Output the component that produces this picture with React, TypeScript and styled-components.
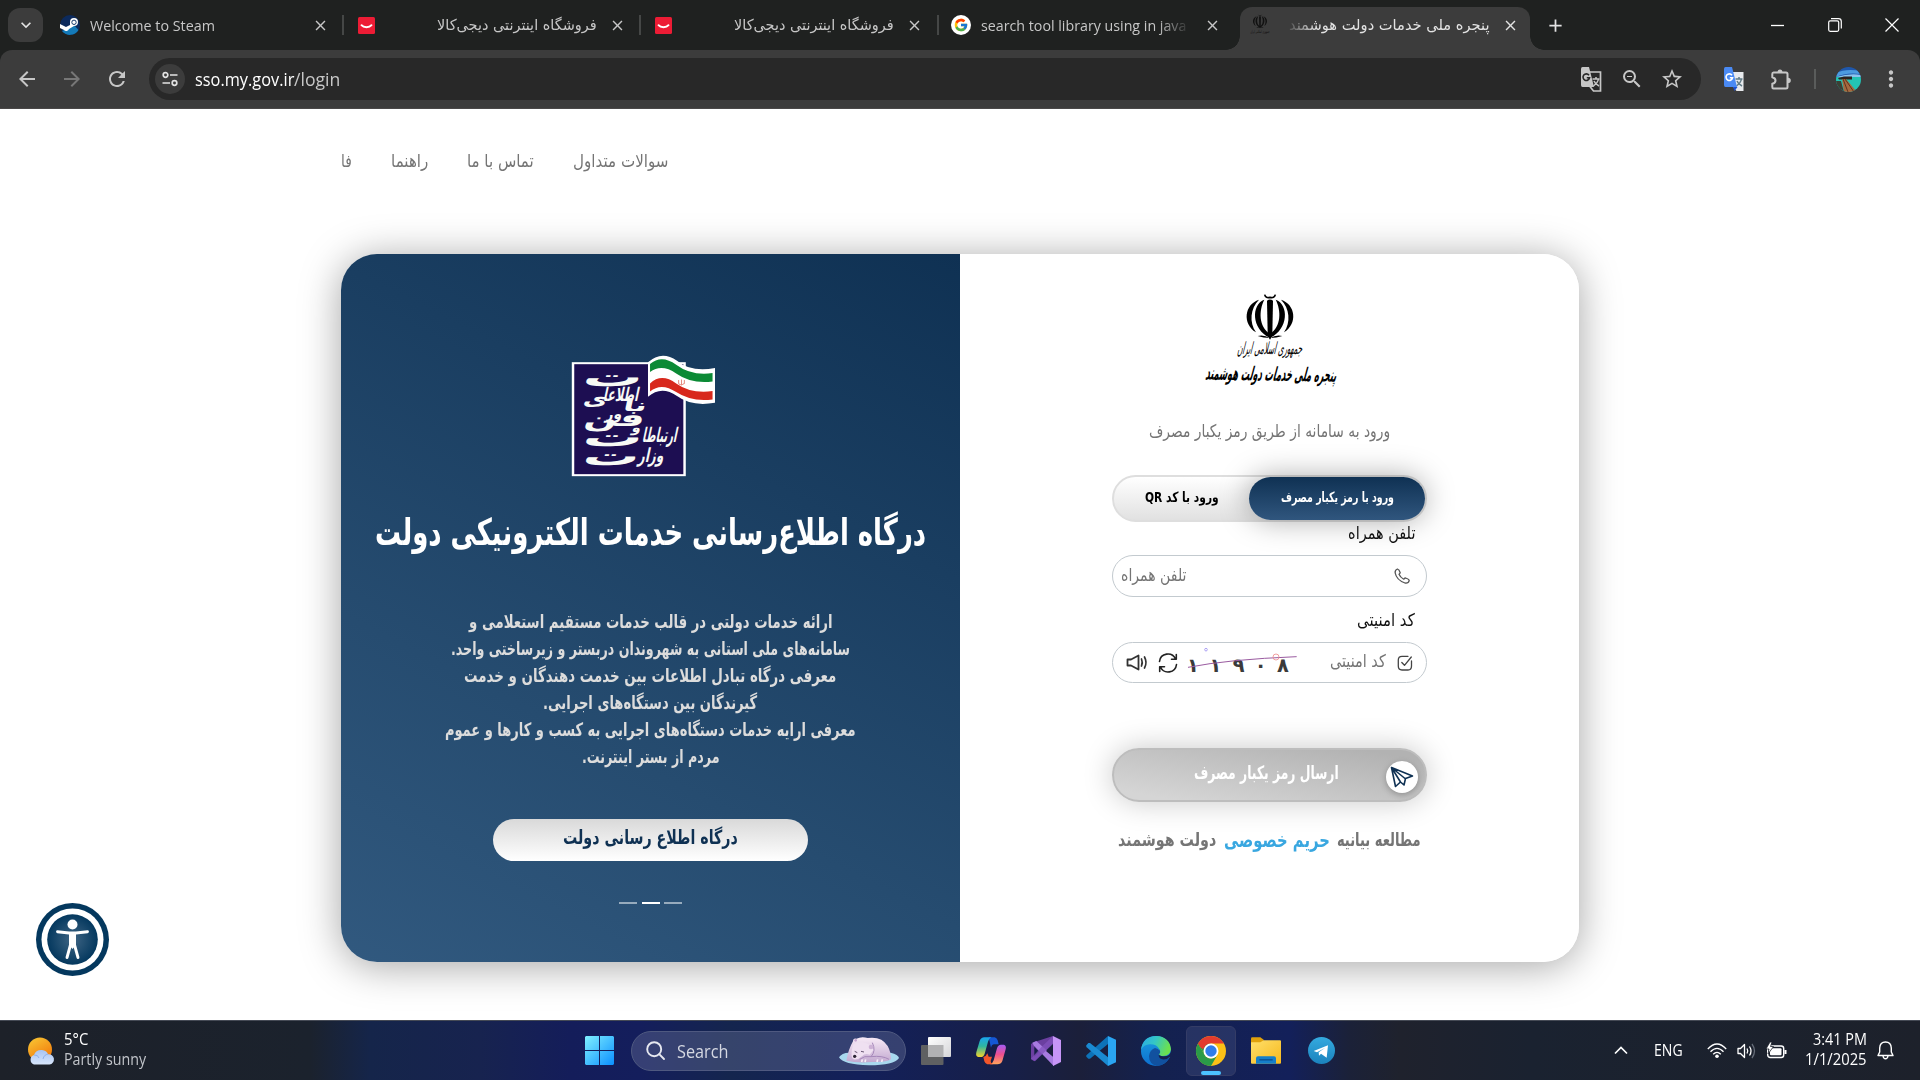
import React, { useLayoutEffect, useRef, useState } from "react";
import styled, { createGlobalStyle } from "styled-components";
import {
  MdArrowBack, MdArrowForward, MdRefresh, MdStarOutline, MdMoreVert,
  MdZoomOut, MdClose, MdAdd, MdKeyboardArrowDown,
} from "react-icons/md";
import { FcGoogle } from "react-icons/fc";

const Global = createGlobalStyle`
  * { box-sizing: border-box; }
  body { margin: 0; background: #fff; overflow: hidden; font-family: "Open Sans", "Noto Sans", "DejaVu Sans", sans-serif; }
  svg { display: block; flex: none; overflow: visible; }
`;

/* ---------- text that keeps to a given width ---------- */
const FitBox = styled.span<{ $w: number; $rtl?: boolean; $size: number; $weight?: number; $color?: string; $lh?: number; $dy?: number; $fade?: string }>`
  display: flex;
  flex: none;
  width: ${(p) => p.$w}px;
  direction: ${(p) => (p.$rtl ? "rtl" : "ltr")};
  font-family: ${(p) => (p.$rtl ? `"DejaVu Sans", sans-serif` : `"Open Sans", "Noto Sans", sans-serif`)};
  font-size: ${(p) => p.$size}px;
  font-weight: ${(p) => p.$weight ?? 400};
  line-height: ${(p) => p.$lh ?? 20}px;
  color: ${(p) => p.$color ?? "inherit"};
  white-space: nowrap;
  margin-top: ${(p) => p.$dy ?? 0}px;
  ${(p) => p.$fade && `mask-image: linear-gradient(${p.$fade}, #000 86%, rgba(0, 0, 0, .15) 100%);`}
`;
const FitInner = styled.span<{ $rtl?: boolean }>`
  display: block;
  flex: none;
  transform-origin: ${(p) => (p.$rtl ? "right" : "left")} center;
`;
type FitProps = { w: number; size: number; rtl?: boolean; weight?: number; color?: string; lh?: number; dy?: number; fade?: string; children: React.ReactNode };
function Fit({ w, size, rtl, weight, color, lh, dy, fade, children }: FitProps) {
  const ref = useRef<HTMLSpanElement>(null);
  const [scale, setScale] = useState(1);
  useLayoutEffect(() => {
    if (ref.current) setScale(w / ref.current.offsetWidth);
  }, [w, size]);
  return (
    <FitBox $w={w} $size={size} $rtl={rtl} $weight={weight} $color={color} $lh={lh} $dy={dy} $fade={fade}>
      <FitInner ref={ref} $rtl={rtl} style={{ transform: `scaleX(${scale})` }}>{children}</FitInner>
    </FitBox>
  );
}

const Screen = styled.div`
  width: 1920px; height: 1080px; display: flex; flex-direction: column; overflow: hidden; background: #fff;
`;

/* ---------- browser chrome ---------- */
const TabStrip = styled.div`
  height: 50px; background: #1f2120; display: flex; align-items: stretch; color: #c7c7c7; flex: none;
`;
const TabSearch = styled.div`
  width: 35px; height: 34px; margin: 8px 4px 0 8px; border-radius: 12px; background: #3c3c3c;
  display: flex; align-items: center; justify-content: center; color: #e3e3e3;
`;
const Tab = styled.div<{ $sep?: boolean }>`
  width: 297.2px; display: flex; align-items: center; padding-left: 12.5px; flex: none;
  background: ${(p) => (p.$sep ? "linear-gradient(#454746,#454746) right 0 top 15px / 2px 20px no-repeat" : "none")};
`;
const ActiveTab = styled.div`
  width: 290px; margin: 7px 0 0 4px; height: 43px; background: #3c3c3c; border-radius: 12px 12px 0 0; flex: none;
  display: flex; align-items: center; padding: 0 0 7px 10px; color: #e3e3e3;
`;
const Flare = styled.div<{ $right?: boolean }>`
  width: 14px; height: 14px; align-self: flex-end; flex: none;
  margin-left: ${(p) => (p.$right ? 0 : -10)}px;
  margin-right: ${(p) => (p.$right ? 0 : -4)}px;
  background: radial-gradient(circle at ${(p) => (p.$right ? "100% 0" : "0 0")}, transparent 13.5px, #3c3c3c 14px);
`;
const IconSlot = styled.div<{ $w?: number }>`
  width: ${(p) => p.$w ?? 20}px; display: flex; align-items: center; justify-content: center; flex: none;
`;
const TabTitle = styled.div<{ $end?: boolean }>`
  width: 210px; margin: 0 12px 0 10px; display: flex; justify-content: ${(p) => (p.$end ? "flex-end" : "flex-start")}; flex: none;
`;
const WindowButtons = styled.div`
  margin-left: auto; display: flex; align-items: center; color: #fff;
`;
const WinBtn = styled.div`
  width: 57px; display: flex; justify-content: center;
`;
const StripBack = styled.div`
  background: #1f2120; flex: none;
`;
const Toolbar = styled.div`
  height: 59px; background: #3c3c3c; border-radius: 12px 12px 0 0; display: flex; align-items: center; flex: none;
  border-bottom: 1px solid #4a4848; color: #c7c7c7; padding-left: 4.5px;
`;
const Omnibox = styled.div`
  width: 1552px; height: 42px; border-radius: 21px; background: #282828; margin-left: 9px; display: flex; align-items: center;
  padding: 0 8px 0 6px; flex: none;
`;
const SiteInfo = styled.div`
  width: 30px; height: 30px; border-radius: 50%; background: #3c3c3c; display: flex; align-items: center; justify-content: center; margin-right: 10.5px;
`;
const Push = styled.div<{ $n?: number }>`flex: ${(p) => p.$n ?? 1};`;
const VRule = styled.div`width: 2px; height: 20px; background: #5a5c5b; margin: 0 20.5px 0 11px;`;

/* ---------- page ---------- */
const Page = styled.main`
  height: 911px; flex: none; display: flex; flex-direction: column; background: #fff; overflow: hidden; position: relative;
`;
const Nav = styled.nav`
  height: 145px; padding: 42px 0 0 341px; display: flex; gap: 39px; color: #757575; flex: none;
`;
const Card = styled.section`
  width: 1238px; height: 708px; margin-left: 341px; border-radius: 36px; display: flex; flex: none;
  box-shadow: 0 4px 40px rgba(0, 0, 0, 0.36);
`;
const Info = styled.div`
  width: 619px; border-radius: 36px 0 0 36px; background: linear-gradient(207deg, #0f3153 0%, #1a3e61 32%, #264c70 66%, #31597f 100%);
  display: flex; flex-direction: column; align-items: center; padding-top: 102px;
`;
const LogoRow = styled.div`display: flex; padding-right: 14px;`;
const Paragraph = styled.div`
  display: flex; flex-direction: column; align-items: center; margin-top: 53px; color: #dcdcdc;
`;
const PortalButton = styled.div`
  width: 315px; height: 42px; border-radius: 21px; margin-top: 49px; display: flex; justify-content: center; align-items: center;
  background: linear-gradient(#d9d9d9, #fff); color: #0f3153;
`;
const Dots = styled.div`display: flex; gap: 4.5px; margin-top: 41px;`;
const Dot = styled.div<{ $on?: boolean }>`width: 18px; height: 2px; background: ${(p) => (p.$on ? "#fff" : "#97abbd")};`;

const Login = styled.div`
  width: 619px; border-radius: 0 36px 36px 0; background: #fff; display: flex; flex-direction: column; align-items: center; padding-top: 39px;
`;
const Toggle = styled.div`
  width: 315px; height: 47px; margin-top: 34px; border-radius: 24px; border: 2px solid #dedede;
  background: linear-gradient(#fff, #e1e1e1); display: flex; align-items: stretch; flex: none;
`;
const ToggleOff = styled.div`
  width: 135px; display: flex; justify-content: flex-end; align-items: center; padding: 0 30px 4px 0; color: #000;
`;
const ToggleOn = styled.div`
  width: 176px; border-radius: 22px; background: linear-gradient(#0f3153, #30567e); color: #fff; display: flex; justify-content: center; align-items: center;
  padding-bottom: 4px; box-shadow: 0 0 30px rgba(0, 0, 0, 0.35);
`;
const FieldLabel = styled.div<{ $h: number }>`
  width: 315px; height: ${(p) => p.$h}px; display: flex; justify-content: flex-end; align-items: center; padding-right: 12px; color: #111; position: relative; flex: none;
`;
const Field = styled.div<{ $h: number; $pl: number; $pr: number }>`
  width: 315px; height: ${(p) => p.$h}px; border: 1px solid #c3cacf; border-radius: 21px; display: flex; align-items: center;
  padding: 0 ${(p) => p.$pr}px 0 ${(p) => p.$pl}px; flex: none; color: #757575; background: #fff;
`;
const Send = styled.div`
  width: 315px; height: 54px; margin-top: 65px; border-radius: 27px; border: 2px solid #bdbdbd; flex: none;
  background: linear-gradient(190deg, #b2b2b2 10%, #d5d5d5 90%); box-shadow: 0 0 30px rgba(0, 0, 0, 0.22);
  display: flex; align-items: center; justify-content: flex-end; padding-right: 7px; gap: 47px; color: #fff;
`;
const SendBadge = styled.div`
  width: 32px; height: 32px; border-radius: 50%; background: #fff; box-shadow: 0 2px 6px rgba(0,0,0,.25); display: flex; align-items: center; justify-content: center; margin-top: 3px;
`;
const Privacy = styled.div`display: flex; margin-top: 28px; gap: 7px; color: #757575; align-items: center;`;
const Access = styled.div`position: absolute; left: 36px; top: 794px;`;

/* ---------- taskbar ---------- */
const Taskbar = styled.footer`
  height: 60px; flex: none; border-top: 1px solid #454a55; display: flex; align-items: center; color: #fff;
  background: linear-gradient(90deg, #1d2129 0, #1b222d 310px, #15254a 370px, #17234f 480px, #141d5a 570px, #141e5c 640px, #14254e 730px, #13205a 860px, #171f48 1010px, #1b1f3a 1080px, #14214e 1150px, #13205a 1290px, #1b2138 1350px, #1f222d 1400px, #1a2230 1530px, #1d212b 1920px);
`;
const Weather = styled.div`width: 585px; padding-left: 27px; display: flex; gap: 9px; align-items: center; flex: none;`;
const Stack = styled.div<{ $end?: boolean }>`
  display: flex; flex-direction: column; padding-bottom: 3px; margin-left: ${(p) => (p.$end ? 5 : 0)}px; align-items: ${(p) => (p.$end ? "flex-end" : "flex-start")};
`;
const SearchBox = styled.div`
  width: 275px; height: 40px; margin: 0 2.5px 0 17px; border-radius: 20px; border: 1px solid #4f5980; background: rgba(120, 130, 165, 0.34);
  display: flex; align-items: center; padding: 0 6px 0 14px; flex: none; color: #d5d8e2;
`;
const AppSlot = styled.div<{ $active?: boolean }>`
  width: ${(p) => (p.$active ? 50 : 55)}px; height: 50px; margin: 0 ${(p) => (p.$active ? 2.5 : 0)}px; flex: none; display: flex; flex-direction: column; align-items: center; justify-content: center;
  border-radius: 6px; border: ${(p) => (p.$active ? "1px solid #343c66" : "0")};
  background: ${(p) => (p.$active ? "rgba(110,120,160,.22)" : "none")};
`;
const ActiveBar = styled.div`width: 20px; height: 4px; border-radius: 2px; background: #4cc2ff; margin: 5px 0 -9px;`;
const Tray = styled.div`margin-left: auto; display: flex; align-items: center; padding-right: 16.5px;`;

/* ---------- drawings ---------- */
const Digikala = () => (
  <svg width="17" height="17" viewBox="0 0 17 17"><rect width="17" height="17" rx="1.5" fill="#ed1c35" /><path d="M3.5 8.2c2.2 2.7 7.800 2.700 10 0" stroke="#fff" strokeWidth="1.9" fill="none" strokeLinecap="round" /></svg>
);
const emblemHalf = (
  <>
    <path d="M537 90C493 104 486 162 528 188C507 158 511 116 537 90Z" />
    <path d="M553 90C513 104 514 178 569 204L570 192C536 172 536 122 553 90Z" />
  </>
);
const EmblemShape = () => (
  <g>
    {emblemHalf}
    <g transform="translate(1140 0) scale(-1 1)">{emblemHalf}</g>
    <path d="M561 93Q570 86 579 93L577 190Q574 206 570 210Q566 206 563 190Z" />
    <path d="M533 199Q552 194 570 206Q588 194 607 199Q590 205 570 205Q550 205 533 199Z" />
    <path d="M554 75Q557 87 570 83Q583 87 586 75" fill="none" stroke="currentColor" strokeWidth="5" />
  </g>
);
const svgText = { fontFamily: "DejaVu Sans", direction: "rtl" as const, textAnchor: "middle" as const };
const StateLogo = () => (
  <svg width="136" height="96" viewBox="366 70 408 288" fill="#000" color="#000">
    <EmblemShape />
    <g transform="translate(568 252) skewX(-14)"><text {...svgText} fontSize="50" textLength="194" lengthAdjust="spacingAndGlyphs">جمهوری اسلامی ایران</text></g>
    <g transform="translate(571 333) rotate(1) skewX(-14)"><text {...svgText} fontSize="58" fontWeight="bold" textLength="392" lengthAdjust="spacingAndGlyphs">پنجره ملی خدمات دولت هوشمند</text></g>
  </svg>
);
const Word = ({ x, y, w, s, children }: { x: number; y: number; w: number; s: number; children: string }) => (
  <g transform={`translate(${x + w / 2} ${y}) skewX(-10)`}>
    <text {...svgText} fontSize={s} fontWeight="bold" fill="#f8faf5" textLength={w} lengthAdjust="spacingAndGlyphs">{children}</text>
  </g>
);
const MinistryLogo = () => (
  <svg width="143" height="120" viewBox="593 678 350 359" preserveAspectRatio="none">
    <rect x="595.500" y="699.500" width="273" height="335" fill="#1d0e52" stroke="#fff" strokeWidth="6" />
    <Word x={616} y={768} w={146} s={78}>ت</Word>
    <Word x={668} y={814} w={86} s={56}>اطلاعا</Word>
    <Word x={618} y={826} w={60} s={54}>ی</Word>
    <Word x={716} y={842} w={58} s={50}>نا</Word>
    <Word x={674} y={866} w={40} s={46}>ور</Word>
    <Word x={620} y={888} w={148} s={66}>فن</Word>
    <Word x={738} y={904} w={22} s={40}>و</Word>
    <Word x={616} y={946} w={146} s={78}>ت</Word>
    <Word x={764} y={936} w={84} s={60}>ارتباطا</Word>
    <Word x={616} y={1003} w={138} s={78}>ت</Word>
    <Word x={754} y={994} w={62} s={58}>وزار</Word>
    <path d="M779 697Q812 660 850 692Q885 728 943 714V818Q885 830 850 798Q812 765 779 800Z" fill="#fff" />
    <path d="M784 702Q812 672 848 704Q885 738 937 729V754Q885 762 848 730Q812 700 784 726Z" fill="#0b8a35" />
    <path d="M784 760Q812 728 848 760Q885 792 937 783V808Q885 816 848 786Q812 756 784 784Z" fill="#d8281c" />
    <path d="M854 750v10q6 8 14 0v-10M861 748v18" stroke="#e58b80" strokeWidth="2.500" fill="none" />
  </svg>
);
const Translate = ({ color }: { color?: boolean }) => (
  <svg width="21" height="25" viewBox="0 0 21 25">
    <path d="M8.500 5H19.500V24H12.500L8.500 19" fill={color ? "#e8eaed" : "none"} stroke={color ? "none" : "#c7c7c7"} strokeWidth="1.700" />
    <path d="M11.500 12h7M15 10v2M17.500 12c-.5 3-2.500 5-5 7M13 14c1 2.500 3 4 5 5" stroke={color ? "#5f7a85" : "#c7c7c7"} strokeWidth="1.500" fill="none" />
    <path d="M1.500 0H8L13 20H1.500Q0 20 0 18V2Q0 0 1.500 0Z" fill={color ? "#4a8af4" : "#c7c7c7"} />
    {color && <path d="M9 20H13.500L10.500 24Z" fill="#1a4fd0" />}
    <path d="M8 8.200A3.300 3.300 0 1 0 8.600 10.700H5.800" fill="none" stroke={color ? "#fff" : "#282828"} strokeWidth="1.600" />
  </svg>
);
const Puzzle = () => (
  <svg width="21" height="21" viewBox="0 0 21 21">
    <path d="M2.500 3.500H15Q16.500 3.500 16.500 5V18Q16.500 19.500 15 19.500H2.500Q1.300 19.500 1.300 18V14.800Q4.500 14 4.500 11.500Q4.500 9 1.300 8.200V5Q1.300 3.500 2.500 3.500Z" fill="none" stroke="#c7c7c7" strokeWidth="2" strokeLinejoin="round" />
    <path d="M6.500 3.500A2.500 3 0 0 1 11.500 3.500ZM16.800 8.800A3 2.600 0 0 1 16.800 14Z" fill="#c7c7c7" />
  </svg>
);
const Avatar = () => (
  <svg width="25" height="25" viewBox="0 0 25 25">
    <defs><clipPath id="av"><circle cx="12.500" cy="12.500" r="12.500" /></clipPath></defs>
    <g clipPath="url(#av)">
      <rect width="25" height="10" fill="#1f57ab" /><path d="M0 6Q10 1 25 4V7Q10 5 0 10Z" fill="#4c9be0" /><path d="M0 10Q14 6 25 8V10Z" fill="#8cc4ee" />
      <rect y="10" width="25" height="15" fill="#23c3b4" /><path d="M2 11l6-1.500h8v3H3Z" fill="#2b2420" /><path d="M6 12h4L21 25H8Z" fill="#a5693f" /><path d="M7 12L12 25M9 12L18 25" stroke="#5e3420" /><path d="M0 14h5l3 11H0Z" fill="#3c3f35" />
    </g>
  </svg>
);
const Person = () => (
  <svg width="73" height="73" viewBox="0 0 73 73">
    <defs><radialGradient id="acc"><stop offset="0" stopColor="#3f6584" /><stop offset="1" stopColor="#04385e" /></radialGradient></defs>
    <circle cx="36.500" cy="36.500" r="36.500" fill="#04385e" /><circle cx="36.500" cy="36.500" r="31" fill="#fff" /><circle cx="36.500" cy="36.500" r="25.300" fill="url(#acc)" />
    <circle cx="36.500" cy="21.500" r="5" fill="#fff" />
    <path d="M21.500 28.700L33 30H40L51.500 28.700M36.500 30V42M35 40L31 54.500M38 40L42 54.500" stroke="#fff" strokeWidth="2.900" strokeLinecap="round" fill="none" />
    <path d="M33 29.500H40V42L36.500 46L33 42Z" fill="#fff" />
  </svg>
);
const Captcha = () => (
  <svg width="112" height="36" viewBox="325 562 336 108">
    <g fontFamily="DejaVu Sans" fontWeight="bold" fill="#3a3a3a" fontSize="58" textAnchor="middle">
      <text x="343" y="642">۱</text><text x="410" y="642">۱</text><text x="480" y="642">۹</text><text x="546" y="644">۰</text><text x="613" y="642">۸</text>
    </g>
    <path d="M328 629Q450 605 654 597" stroke="#9a5ba0" strokeWidth="3" fill="none" />
    <circle cx="592" cy="598" r="9" fill="none" stroke="#ee8d8d" strokeWidth="2.500" /><circle cx="382" cy="576" r="4" fill="none" stroke="#8c7df0" strokeWidth="2" />
  </svg>
);
const Speaker = () => (
  <svg width="22" height="17" viewBox="0 0 22 17" fill="none" stroke="#333" strokeWidth="1.800"><path d="M1.500 5.500H5L12.500 1.500V15.500L5 11.500H1.500Z" strokeLinejoin="round" /><path d="M15.500 5Q17 8.500 15.500 12M18.500 3Q21.500 8.500 18.500 14" strokeLinecap="round" strokeWidth="1.700" /></svg>
);
const Reload = () => (
  <svg width="20" height="20" viewBox="0 0 20 20" fill="none" stroke="#222" strokeWidth="1.600" strokeLinecap="round" strokeLinejoin="round"><path d="M1.500 8.500A8.400 8.400 0 0 1 17.500 6M18.300 1.500V6.200H13.500M18.500 11.500A8.400 8.400 0 0 1 2.500 14M1.700 18.500V13.800H6.500" /></svg>
);
const Check = () => (
  <svg width="16" height="16" viewBox="0 0 16 16" fill="none" stroke="#444" strokeWidth="1.300" strokeLinecap="round" strokeLinejoin="round"><path d="M14.500 6V11Q14.500 15 11 15H5Q1.300 15 1.300 11V5Q1.300 1.300 5 1.300H11M4.800 7.500L7.500 10.300L14.300 2" /></svg>
);
const Phone = () => (
  <svg width="16" height="16" viewBox="0 0 16 16" fill="none" stroke="#555" strokeWidth="1.300" strokeLinejoin="round"><path d="M3.500 1Q.6 2.200 1.200 5Q2.500 12 11 15Q14.500 15.500 15.200 12.600Q15.200 11.300 11.600 10Q10.800 10 9.700 11.200Q6.200 9.300 5 6.300L6.200 4.800Q5.200 1.500 3.500 1Z" /></svg>
);
const Plane = () => (
  <svg width="24" height="22" viewBox="0 0 24 22" fill="none" stroke="#0f3153" strokeWidth="1.600" strokeLinejoin="round"><path d="M1.500 1.500L22.500 10L15.500 12.500L14 19L10.500 16L5.500 20.500L1.500 1.500L15 12.500M1.500 1.500L10.500 16" /></svg>
);
const SunCloud = () => (
  <svg width="28" height="28" viewBox="0 0 28 28">
    <defs><linearGradient id="sun" x2=".6" y2="1"><stop stopColor="#f8ca36" /><stop offset="1" stopColor="#f27a0b" /></linearGradient><linearGradient id="cl" x2="0" y2="1"><stop stopColor="#a8c4f2" /><stop offset="1" stopColor="#d7e5fb" /></linearGradient></defs>
    <circle cx="13" cy="12.500" r="12" fill="url(#sun)" /><path d="M7 27.500A5 5 0 0 1 7 18Q9 12.500 15 13Q19.500 13.500 21 17.200A5.200 5.200 0 0 1 22.500 27.500Z" fill="url(#cl)" /><path d="M7 18Q11 17.500 12 21M21 17.200Q17 17.500 16 22" stroke="#8fb0ea" fill="none" />
  </svg>
);
const WinLogo = () => (
  <svg width="29" height="29" viewBox="0 0 29 29"><defs><linearGradient id="win" x2="1" y2="1"><stop stopColor="#80f0ff" /><stop offset="1" stopColor="#0b8fff" /></linearGradient></defs><path d="M1 0H14V14H0V1ZM15 0H28L29 1V14H15ZM0 15H14V29H1L0 28ZM15 15H29V28L28 29H15Z" fill="url(#win)" /></svg>
);
const Bear = () => (
  <svg width="60" height="30" viewBox="0 0 180 90">
    <defs><linearGradient id="bear" x2="0" y2="1"><stop stopColor="#f8ebf7" /><stop offset="1" stopColor="#c3a9d0" /></linearGradient></defs>
    <path d="M0 64Q8 50 30 50H155Q178 56 180 66Q165 88 90 88Q12 86 0 64Z" fill="#a8d8ee" />
    <path d="M22 74Q28 40 42 16Q42 6 52 8Q68 0 86 6Q128 0 146 30Q156 48 156 70Q140 80 100 78Q55 82 22 74Z" fill="url(#bear)" />
    <path d="M100 20Q112 45 96 62Q76 58 62 70M96 62Q130 58 150 70" stroke="#a688ba" strokeWidth="3" fill="none" />
    <path d="M42 26Q58 12 82 22Q100 28 103 42L92 56Q78 50 70 60Q58 72 44 70Q32 64 42 26Z" fill="#efe0f1" />
    <circle cx="47" cy="61" r="5" fill="#2b2333" /><circle cx="96" cy="33" r="7" fill="#cdb2d6" /><circle cx="50" cy="13" r="4" fill="#c6a5cf" /><path d="M47 46l8 4M66 46l9 2" stroke="#4a3a58" strokeWidth="2.500" /><path d="M70 70l-2 8M80 70l-2 8M116 70l-2 8M130 70l-2 8" stroke="#f5ecf7" strokeWidth="5" />
  </svg>
);
const TaskView = () => (
  <svg width="30" height="28" viewBox="0 0 30 28"><defs><linearGradient id="tv" x2="1" y2="1"><stop stopColor="#fff" /><stop offset="1" stopColor="#d5d5d8" /></linearGradient></defs><rect y="8" width="22.500" height="20" rx="1" fill="#5f6062" /><rect x="7" width="23" height="20" rx="1" fill="url(#tv)" /><rect x="7" y="8" width="15.500" height="12" fill="#b1b1b3" /></svg>
);
const Copilot = () => (
  <svg width="30" height="28" viewBox="0 0 90 84">
    <defs>
      <linearGradient id="cpa" x2="0" y2="1"><stop stopColor="#1aa6ee" /><stop offset=".45" stopColor="#2fb7a0" /><stop offset="1" stopColor="#f4d42a" /></linearGradient>
      <linearGradient id="cpb" x2="0" y2="1"><stop stopColor="#a35cf5" /><stop offset=".5" stopColor="#ee4f8e" /><stop offset="1" stopColor="#ffa55c" /></linearGradient>
    </defs>
    <path d="M38 1H56Q62 2 65 10L68 22H54Q48 22 45 32Z" fill="#1558d6" />
    <path d="M25 1H46Q39 4 36 14L26 50Q23 60 14 60H7Q-2 59 1 46L11 12Q15 1 25 1Z" fill="url(#cpa)" />
    <path d="M64 82H42Q50 80 53 70L63 34Q66 23 75 23H83Q92 25 89 37L79 72Q75 82 64 82Z" fill="url(#cpb)" />
    <path d="M51 82H34Q28 81 25 73L22 60Q30 59 34 49L38 59H48L44 72Q43 78 51 82Z" fill="#f2562b" />
  </svg>
);
const VisualStudio = () => (
  <svg width="30" height="30" viewBox="0 0 90 90"><path d="M0 24L10 18L66 0V22L10 76L0 70Z" fill="#6b3fa0" /><path d="M10 32V62L24 47Z" fill="#171f48" /><path d="M4 20L16 15L68 62V90L8 28Z" fill="#a77be0" /><path d="M0 68L12 76L66 24V0L32 32Z" fill="#8253bd" opacity=".75" /><path d="M30 10L48 18L66 0V24L44 44L30 30Z" fill="#171f48" opacity="0" /><path d="M66 0L90 12V78L66 90Z" fill="#c795f7" /><path d="M66 28V62L45 45Z" fill="#1b1f3e" /></svg>
);
const VsCode = () => (
  <svg width="30" height="30" viewBox="0 0 90 90"><path d="M1 58L66 0V24L12 68H7L1 62Z" fill="#0d72b8" /><path d="M1 28L7 21H12L66 64V90L1 33Z" fill="#1a8ad2" /><path d="M66 0L90 11V79L66 90Z" fill="#2aa5f2" /></svg>
);
const Edge = () => (
  <svg width="30" height="30" viewBox="0 0 90 90">
    <defs><linearGradient id="eg" x2="1" y2=".3"><stop stopColor="#2aa9e8" /><stop offset=".5" stopColor="#34c6c6" /><stop offset="1" stopColor="#6be04f" /></linearGradient><linearGradient id="eb" x2="0" y2="1"><stop stopColor="#1b9fdf" /><stop offset="1" stopColor="#0d6fd0" /></linearGradient></defs>
    <circle cx="45" cy="45" r="45" fill="url(#eb)" />
    <path d="M0 42Q5 0 46 0Q86 2 90 40Q88 60 66 60Q54 60 54 54Q60 48 54 38Q46 24 26 25Q8 26 0 42Z" fill="url(#eg)" />
    <path d="M86 64Q74 88 48 90Q24 84 24 60Q26 42 42 36Q52 38 56 44Q52 36 56 42Q60 50 53 55Q54 68 70 68Q78 68 86 64Z" fill="#11519f" />
    <path d="M90 44Q88 62 66 61Q54 60 54 54Q50 66 64 70Q78 72 90 60Z" fill="#16204e" />
  </svg>
);
const Chrome = () => (
  <svg width="30" height="30" viewBox="0 0 90 90">
    <circle cx="45" cy="45" r="45" fill="#fbc116" /><path d="M6 22.500A45 45 0 0 0 45 90L64.500 56.200A22.500 22.500 0 0 1 25.500 56.200Z" fill="#2a9b48" /><path d="M6 22.500L25.500 56.200L45 67L45 22.500Z" fill="#2a9b48" /><path d="M6 22.500A45 45 0 0 1 84 22.500H45A22.500 22.500 0 0 0 24 37Q18 44 6 22.500Z" fill="#e33b2e" />
    <circle cx="45" cy="45" r="22.500" fill="#fff" /><circle cx="45" cy="45" r="17" fill="#2f7de9" />
  </svg>
);
const Folder = () => (
  <svg width="30" height="27" viewBox="0 0 90 80"><defs><linearGradient id="fo" x2="1" y2="1"><stop stopColor="#ffdf6b" /><stop offset="1" stopColor="#f6b91d" /></linearGradient></defs><path d="M0 4Q0 0 4 0H28L38 8V24H0Z" fill="#e0a10c" /><path d="M0 15H28L38 9H87Q90 9 90 12V77Q90 80 87 80H3Q0 80 0 77Z" fill="url(#fo)" /><path d="M15 80V63Q15 57 21 57H69Q75 57 75 63V80Z" fill="#157fca" /><path d="M25 68H65" stroke="#0a4f91" strokeWidth="4" /></svg>
);
const Telegram = () => (
  <svg width="27" height="27" viewBox="0 0 81 81"><defs><linearGradient id="tg" x2="0" y2="1"><stop stopColor="#34aadf" /><stop offset="1" stopColor="#1b82bd" /></linearGradient></defs><circle cx="40.500" cy="40.500" r="40.500" fill="url(#tg)" /><path d="M17 42L60 25L56 62L39 50L33 56L32 46L52 32L27 46Z" fill="#fff" /></svg>
);
const Wifi = () => (
  <svg width="20" height="16" viewBox="0 0 20 16" fill="none" stroke="#fff" strokeWidth="1.300"><path d="M.8 6Q10-4 19.200 6M3.500 8.800Q10 1.800 16.500 8.800M6.200 11.300Q10 7.300 13.800 11.300" /><circle cx="10" cy="13.300" r="1.800" fill="#fff" stroke="none" /></svg>
);
const Volume = () => (
  <svg width="20" height="16" viewBox="0 0 20 16" fill="none" stroke="#fff" strokeWidth="1.300" strokeLinejoin="round"><path d="M1 5.500H3.500L7.500 1.500V14.500L3.500 10.500H1ZM10 5.500Q11.500 8 10 10.500M12.500 3.500Q15.500 8 12.500 12.500" /><path d="M15 1Q20 8 15 15" stroke="#666c78" /></svg>
);
const Battery = () => (
  <svg width="21" height="17" viewBox="0 0 21 17"><rect x="1.700" y="4" width="16" height="11.500" rx="2.500" fill="none" stroke="#fff" strokeWidth="1.400" /><rect x="4" y="6.300" width="11.500" height="7" rx="1" fill="#fff" /><path d="M18.500 8H20.500V12H18.500Z" fill="#fff" /><path d="M4 0L0 7H3L2 12L7.500 4.500H4.500L6 0Z" fill="#fff" stroke="#1d212b" strokeWidth=".8" /></svg>
);
const Bell = () => (
  <svg width="17" height="19" viewBox="0 0 17 19" fill="none" stroke="#fff" strokeWidth="1.400" strokeLinejoin="round"><path d="M1 14.500L2.700 11V7Q3 1 8.500 1Q14 1 14.300 7V11L16 14.500ZM6 15Q6.500 17.800 8.500 17.800Q10.500 17.800 11 15" /></svg>
);

const X = () => <IconSlot $w={18}><MdClose size={17} /></IconSlot>;

const lines: [string, number][] = [
  ["ارائه خدمات دولتی در قالب خدمات مستقیم استعلامی و", 363],
  ["سامانه‌های ملی استانی به شهروندان دربستر و زیرساختی واحد.", 399],
  ["معرفی درگاه تبادل اطلاعات بین خدمت دهندگان و خدمت", 372],
  ["گیرندگان بین دستگاه‌های اجرایی.", 214],
  ["معرفی ارایه خدمات دستگاه‌های اجرایی به کسب و کارها و عموم", 411],
  ["مردم از بستر اینترنت.", 138],
];

export default function App() {
  return (
    <Screen>
      <Global />
      <TabStrip>
        <TabSearch><MdKeyboardArrowDown size={20} /></TabSearch>
        <Tab $sep>
          <IconSlot>
            <svg width="20" height="20" viewBox="0 0 20 20"><circle cx="10" cy="10" r="10" fill="#0c2a5c" /><path d="M2 16A10 10 0 0 0 18.500 15L14 10Z" fill="#147ab8" /><path d="M0 9L6 12L10 10L10 7A4 4 0 1 1 14 11L9 14A3 3 0 0 1 4 15L0 13Z" fill="#fff" /><circle cx="14" cy="7.300" r="2.200" fill="none" stroke="#15396b" /></svg>
          </IconSlot>
          <TabTitle><Fit w={125} size={15}>Welcome to Steam</Fit></TabTitle><X />
        </Tab>
        {[0, 1].map((i) => (
          <Tab key={i} $sep>
            <IconSlot><Digikala /></IconSlot>
            <TabTitle $end><Fit w={160} size={15} rtl>فروشگاه اینترنتی دیجی‌کالا</Fit></TabTitle><X />
          </Tab>
        ))}
        <Tab>
          <IconSlot><svg width="20" height="20" viewBox="0 0 20 20"><circle cx="10" cy="10" r="10" fill="#fff" /><g transform="translate(2.500 2.500)"><FcGoogle size={15} /></g></svg></IconSlot>
          <TabTitle><Fit w={205} size={15} fade="90deg">search tool library using in java</Fit></TabTitle><X />
        </Tab>
        <Flare />
        <ActiveTab>
          <IconSlot><svg width="20" height="22" viewBox="470 70 200 215" fill="#111" color="#111"><EmblemShape /><text {...svgText} x="570" y="262" fontSize="44" textLength="190" lengthAdjust="spacingAndGlyphs">جمهوری اسلامی ایران</text></svg></IconSlot>
          <TabTitle $end><Fit w={201} size={15} rtl fade="270deg">پنجره ملی خدمات دولت هوشمند</Fit></TabTitle><X />
        </ActiveTab>
        <Flare $right />
        <IconSlot $w={24}><MdAdd size={21} color="#e3e3e3" /></IconSlot>
        <WindowButtons>
          <WinBtn><svg width="13" height="13"><path d="M0 6.500H13" stroke="#fff" strokeWidth="1.300" /></svg></WinBtn>
          <WinBtn><svg width="14" height="14" viewBox="0 0 14 14" fill="none" stroke="#fff" strokeWidth="1.200"><rect x=".7" y="2.800" width="10" height="10.500" rx="1.500" /><path d="M3 .7H10.500Q13.300.7 13.300 3.500V10.500" /></svg></WinBtn>
          <WinBtn><svg width="14" height="14"><path d="M.5.5L13.500 13.500M13.500.5L.5 13.500" stroke="#fff" strokeWidth="1.200" /></svg></WinBtn>
        </WindowButtons>
      </TabStrip>
      <StripBack>
        <Toolbar>
          <IconSlot $w={45}><MdArrowBack size={24} /></IconSlot>
          <IconSlot $w={45}><MdArrowForward size={24} color="#777" /></IconSlot>
          <IconSlot $w={45}><MdRefresh size={24} /></IconSlot>
          <Omnibox>
            <SiteInfo>
              <svg width="16" height="16" viewBox="0 0 16 16" fill="none" stroke="#e3e3e3" strokeWidth="1.700"><circle cx="3.500" cy="4" r="2.300" /><path d="M8 4H15.500M.5 12H8" /><circle cx="12.500" cy="12" r="2.300" /></svg>
            </SiteInfo>
            <Fit w={99} size={18} color="#fff" lh={24}>sso.my.gov.ir</Fit><Fit w={46} size={18} color="#c7c7c7" lh={24}>/login</Fit>
            <Push />
            <IconSlot $w={40}><Translate /></IconSlot>
            <IconSlot $w={40}><MdZoomOut size={24} /></IconSlot>
            <IconSlot $w={41}><MdStarOutline size={24} /></IconSlot>
          </Omnibox>
          <IconSlot $w={68}><Translate color /></IconSlot>
          <IconSlot $w={26}><Puzzle /></IconSlot>
          <Push />
          <VRule />
          <Avatar />
          <IconSlot $w={59}><MdMoreVert size={26} /></IconSlot>
        </Toolbar>
      </StripBack>

      <Page>
        <Nav>
          <Fit w={11} size={17.5} rtl>فا</Fit>
          <Fit w={37} size={17.5} rtl>راهنما</Fit>
          <Fit w={67} size={17.5} rtl>تماس با ما</Fit>
          <Fit w={95} size={17.5} rtl>سوالات متداول</Fit>
        </Nav>
        <Card>
          <Info>
            <LogoRow><MinistryLogo /></LogoRow>
            <Fit w={551} size={37} weight={700} rtl color="#fff" lh={44} dy={35}>درگاه اطلاع‌رسانی خدمات الکترونیکی دولت</Fit>
            <Paragraph>
              {lines.map(([t, w]) => <Fit key={t} w={w} size={18.5} weight={700} rtl lh={27}>{t}</Fit>)}
            </Paragraph>
            <PortalButton><Fit w={175} size={19.5} weight={700} rtl dy={-5}>درگاه اطلاع رسانی دولت</Fit></PortalButton>
            <Dots><Dot /><Dot $on /><Dot /></Dots>
          </Info>
          <Login>
            <StateLogo />
            <Fit w={241} size={17.5} rtl color="#757575" lh={20} dy={32}>ورود به سامانه از طریق رمز یکبار مصرف</Fit>
            <Toggle>
              <ToggleOff><Fit w={74} size={14} weight={700} rtl>ورود با کد QR</Fit></ToggleOff>
              <ToggleOn><Fit w={113} size={14} weight={700} rtl>ورود با رمز یکبار مصرف</Fit></ToggleOn>
            </Toggle>
            <FieldLabel $h={33}><Fit w={67} size={17.5} rtl dy={-12}>تلفن همراه</Fit></FieldLabel>
            <Field $h={42} $pl={8} $pr={13}><Fit w={65} size={17.5} rtl dy={-3}>تلفن همراه</Fit><Push /><IconSlot $w={22}><Phone /></IconSlot></Field>
            <FieldLabel $h={45}><Fit w={58} size={17.5} rtl>کد امنیتی</Fit></FieldLabel>
            <Field $h={41} $pl={13} $pr={3}>
              <Speaker /><IconSlot $w={39}><Reload /></IconSlot><Captcha /><Push />
              <Fit w={56} size={17.5} rtl dy={-3}>کد امنیتی</Fit><IconSlot $w={37}><Check /></IconSlot>
            </Field>
            <Send><Fit w={145} size={18.5} weight={700} rtl dy={-5}>ارسال رمز یکبار مصرف</Fit><SendBadge><Plane /></SendBadge></Send>
            <Privacy>
              <Fit w={98} size={18.5} weight={700} rtl>دولت هوشمند</Fit>
              <Fit w={106} size={20.5} weight={700} rtl color="#39a7e0">حریم خصوصی</Fit>
              <Fit w={84} size={18.5} weight={700} rtl>مطالعه بیانیه</Fit>
            </Privacy>
          </Login>
        </Card>
        <Access><Person /></Access>
      </Page>

      <Taskbar>
        <Weather>
          <SunCloud />
          <Stack><Fit w={24} size={15.5}>5°C</Fit><Fit w={82} size={15.5} color="#c2c5ca">Partly sunny</Fit></Stack>
        </Weather>
        <WinLogo />
        <SearchBox>
          <svg width="19" height="19" viewBox="0 0 19 19" fill="none" stroke="#e6e8f0" strokeWidth="1.900"><circle cx="8.200" cy="8.200" r="7" /><path d="M13.200 13.200L18 18" strokeLinecap="round" /></svg>
          <Push />
          <Fit w={51} size={17.5} lh={24}>Search</Fit>
          <Push $n={9} />
          <Bear />
        </SearchBox>
        <AppSlot><TaskView /></AppSlot>
        <AppSlot><Copilot /></AppSlot>
        <AppSlot><VisualStudio /></AppSlot>
        <AppSlot><VsCode /></AppSlot>
        <AppSlot><Edge /></AppSlot>
        <AppSlot $active><Chrome /><ActiveBar /></AppSlot>
        <AppSlot><Folder /></AppSlot>
        <AppSlot><Telegram /></AppSlot>
        <Tray>
          <IconSlot $w={46}><svg width="14" height="9" viewBox="0 0 14 9"><path d="M1 7.500L7 1.500L13 7.500" fill="none" stroke="#fff" strokeWidth="1.700" /></svg></IconSlot>
          <IconSlot $w={50}><Fit w={29} size={15.5} dy={-2}>ENG</Fit></IconSlot>
          <IconSlot $w={46}><Wifi /></IconSlot>
          <IconSlot $w={14}><Volume /></IconSlot>
          <IconSlot $w={46}><Battery /></IconSlot>
          <Stack $end><Fit w={54} size={15.5}>3:41 PM</Fit><Fit w={62} size={15.5}>1/1/2025</Fit></Stack>
          <IconSlot $w={37}><Bell /></IconSlot>
        </Tray>
      </Taskbar>
    </Screen>
  );
}
